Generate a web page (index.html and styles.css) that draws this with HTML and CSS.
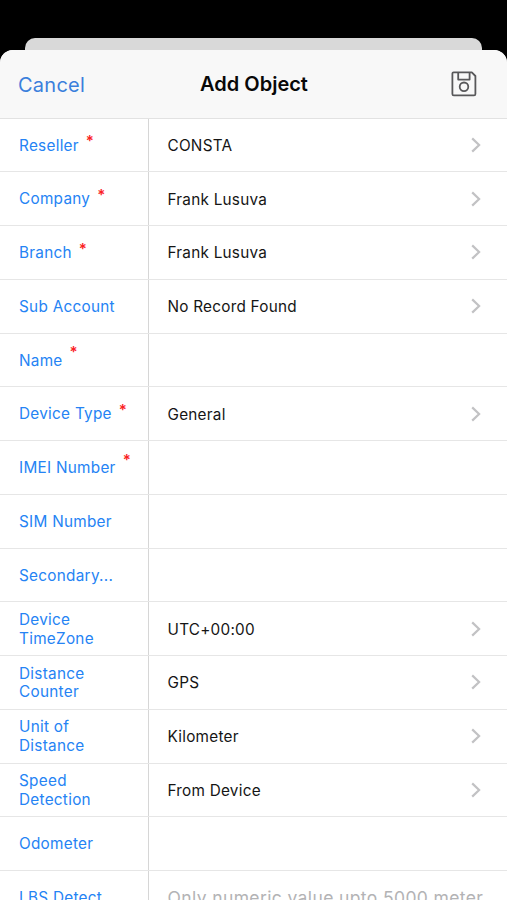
FILE: index.html
```html
<!DOCTYPE html>
<html lang="en">
<head>
<meta charset="utf-8">
<title>Add Object</title>
<link rel="stylesheet" href="styles.css">
</head>
<body>
<svg width="0" height="0" class="defs"><symbol id="chevron" viewBox="0 0 10 16"><path d="M1.2 1.4 8.1 8l-6.9 6.6" fill="none" stroke="#c2c2c4" stroke-width="2.2"/></symbol></svg>
<div class="screen">
  <div class="backdrop"></div>
  <main class="sheet">
    <header class="bar">
      <span class="cancel">Cancel</span>
      <h1 class="title">Add Object</h1>
      <svg class="save" viewBox="0 0 26 26" fill="none" stroke="#58585a" stroke-width="1.8" stroke-linejoin="round"><path d="M2.6 1.4h18.2l3.6 3.6V23q0 1.4-1.4 1.4H2.8q-1.4 0-1.4-1.4V2.6q0-1.2 1.2-1.2z"/><path d="M7.2 1.6v7h11.4v-7"/><circle cx="13" cy="15.8" r="4.3"/></svg>
    </header>
    <div class="list">
      <div class="row"><div class="label"><span>Reseller</span><sup>*</sup></div><div class="value">CONSTA</div><svg class="chev"><use href="#chevron"/></svg></div>
      <div class="row"><div class="label"><span>Company</span><sup>*</sup></div><div class="value">Frank Lusuva</div><svg class="chev"><use href="#chevron"/></svg></div>
      <div class="row"><div class="label"><span>Branch</span><sup>*</sup></div><div class="value">Frank Lusuva</div><svg class="chev"><use href="#chevron"/></svg></div>
      <div class="row"><div class="label"><span>Sub Account</span></div><div class="value">No Record Found</div><svg class="chev"><use href="#chevron"/></svg></div>
      <div class="row"><div class="label"><span>Name</span><sup class="high">*</sup></div><div class="value"></div></div>
      <div class="row"><div class="label"><span>Device Type</span><sup>*</sup></div><div class="value">General</div><svg class="chev"><use href="#chevron"/></svg></div>
      <div class="row"><div class="label"><span>IMEI Number</span><sup class="high">*</sup></div><div class="value"></div></div>
      <div class="row"><div class="label"><span>SIM Number</span></div><div class="value"></div></div>
      <div class="row"><div class="label"><span>Secondary...</span></div><div class="value"></div></div>
      <div class="row"><div class="label"><span>Device<br>TimeZone</span></div><div class="value">UTC+00:00</div><svg class="chev"><use href="#chevron"/></svg></div>
      <div class="row"><div class="label"><span>Distance<br>Counter</span></div><div class="value">GPS</div><svg class="chev"><use href="#chevron"/></svg></div>
      <div class="row"><div class="label"><span>Unit of<br>Distance</span></div><div class="value">Kilometer</div><svg class="chev"><use href="#chevron"/></svg></div>
      <div class="row"><div class="label"><span>Speed<br>Detection</span></div><div class="value">From Device</div><svg class="chev"><use href="#chevron"/></svg></div>
      <div class="row"><div class="label"><span>Odometer</span></div><div class="value"></div></div>
      <div class="row"><div class="label"><span>LBS Detect</span></div><div class="value hint">Only numeric value upto 5000 meter</div></div>
    </div>
  </main>
</div>
</body>
</html>
```

FILE: styles.css
```css
* { box-sizing: border-box; }
body { margin: 0; background: #000; font-family: Inter, "Liberation Sans", sans-serif; }
.defs { display: block; }
.screen { height: 900px; overflow: hidden; display: flex; flex-direction: column; padding-top: 38px; }
.backdrop { flex: none; height: 12px; margin: 0 25px; background: #d9d9d9; border-radius: 10px 10px 0 0; }
.sheet { flex: 1; min-height: 0; overflow: hidden; background: #fff; border-radius: 13px 13px 0 0; }
.bar { height: 68.5px; display: grid; grid-template-columns: 1fr auto 1fr; align-items: center; padding: 1px 30px 0 18px; background: #f8f8f8; border-bottom: 1px solid #e2e2e2; }
.cancel { padding-top: 1px; color: #3b7fdc; font-size: 20px; letter-spacing: 0.25px; }
.title { margin: 0; font-size: 20px; font-weight: 600; letter-spacing: 0; color: #080808; transform: translateX(6.5px); }
.save { width: 26px; height: 26px; justify-self: end; }
.row { height: 53.75px; display: flex; align-items: center; border-bottom: 1px solid #e6e6e6; padding-right: 26.5px; }
.label { width: 149px; height: 100%; flex: none; display: flex; align-items: center; padding: 2px 0 0 19px; border-right: 1px solid #d6d6d6; color: #2583f4; font-size: 15.3px; line-height: 18.7px; letter-spacing: 0.28px; white-space: nowrap; }
.label sup { position: relative; top: -4.5px; margin-left: 7px; color: #fa2023; font-size: 15px; font-weight: 600; line-height: 18px; letter-spacing: 0; }
.label sup.high { top: -8.5px; }
.value { flex: 1; padding: 1px 0 0 18.5px; color: #151515; font-size: 15.3px; letter-spacing: 0.25px; white-space: nowrap; }
.hint { padding-top: 0; color: #b3b3b5; font-size: 17.5px; letter-spacing: 0.38px; }
.chev { width: 10px; height: 16px; flex: none; }
```
